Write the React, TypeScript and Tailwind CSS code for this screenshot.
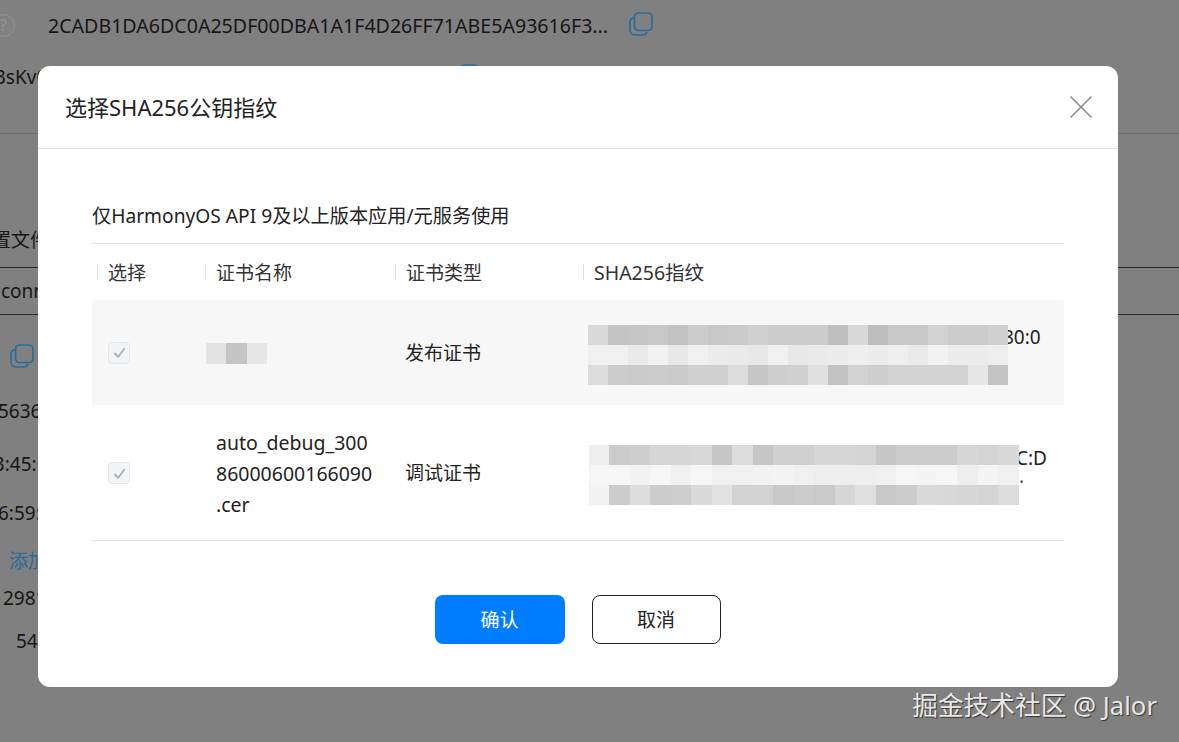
import { X } from "lucide-react";

const FONT = "font-['Noto_Sans','Noto_Sans_CJK_SC',sans-serif]";

const MOSAIC_A = [
  ["#dadada", "#c4c4c4", "#c6c6c6", "#c8c8c8", "#c2c2c2", "#cccccc", "#c8c8c8", "#cacaca", "#d0d0d0", "#cccccc", "#cccccc", "#cccccc", "#bfbfbf", "#d8d8d8", "#bdbdbd", "#c8c8c8", "#c8c8c8", "#d2d2d2", "#cccccc", "#cccccc", "#d0d0d0"],
  ["#f0f0f0", "#f0f0f0", "#eaeaea", "#f2f2f2", "#e8e8e8", "#f0f0f0", "#ececec", "#eaeaea", "#e8e8e8", "#f0f0f0", "#e8e8e8", "#eaeaea", "#ececec", "#eeeeee", "#ececec", "#eeeeee", "#eaeaea", "#f2f2f2", "#ececec", "#ececec", "#eeeeee"],
  ["#dcdcdc", "#cccccc", "#cacaca", "#cccccc", "#cacaca", "#d0d0d0", "#d0d0d0", "#dcdcdc", "#c6c6c6", "#cecece", "#d0d0d0", "#e0e0e0", "#c2c2c2", "#d2d2d2", "#cecece", "#d2d2d2", "#d2d2d2", "#d2d2d2", "#d2d2d2", "#e6e6e6", "#c4c4c4"],
];

const MOSAIC_B = [
  ["#eeeeee", "#cccccc", "#cecece", "#d6d6d6", "#d6d6d6", "#d8d8d8", "#c6c6c6", "#dcdcdc", "#c6c6c6", "#d0d0d0", "#d0d0d0", "#d6d6d6", "#d6d6d6", "#d4d4d4", "#c6c6c6", "#cccccc", "#cccccc", "#cccccc", "#d6d6d6", "#d4d4d4", "#d8d8d8"],
  ["#f5f5f5", "#f6f6f6", "#f2f2f2", "#f6f6f6", "#f0f0f0", "#f6f6f6", "#f0f0f0", "#f0f0f0", "#f2f2f2", "#f4f4f4", "#f0f0f0", "#eeeeee", "#eeeeee", "#eeeeee", "#f0f0f0", "#f6f6f6", "#f4f4f4", "#f6f6f6", "#eeeeee", "#f4f4f4", "#f0f0f0"],
  ["#f2f2f2", "#cccccc", "#dcdcdc", "#cccccc", "#cecece", "#dadada", "#e2e2e2", "#d2d2d2", "#d2d2d2", "#c8c8c8", "#cccccc", "#cacaca", "#d6d6d6", "#e0e0e0", "#c8c8c8", "#cccccc", "#dadada", "#d8d8d8", "#d6d6d6", "#d4d4d4", "#dcdcdc"],
];

function CopyIcon({ className }: { className: string }) {
  return (
    <svg viewBox="0 0 24 24" fill="none" stroke="currentColor" strokeWidth="1.7" className={className}>
      <rect x="5.5" y="1" width="17.5" height="17.5" rx="4" />
      <path d="M4.5 5.5C2.4 6.3 1 8 1 10.5v7.5c0 3 2.2 5 5 5h7.5c2.2 0 3.8-1 4.6-3" />
    </svg>
  );
}

function Check() {
  return (
    <div className="flex h-[22px] w-[22px] items-center justify-center rounded-[4px] border border-[#e3e7ec] bg-[#f2f4f6]">
      <svg viewBox="0 0 16 16" fill="none" stroke="#aeb2b6" strokeWidth="2" className="h-[15px] w-[15px]">
        <path d="M2.5 8.5 6.5 12.5 13.5 3.5" />
      </svg>
    </div>
  );
}

function Mosaic({ rows, className }: { rows: string[][]; className: string }) {
  return (
    <div className={className}>
      {rows.map((row, i) => (
        <div key={i} className="flex h-5">
          {row.map((c, j) => (
            <div key={j} className="flex-1" style={{ backgroundColor: c }} />
          ))}
        </div>
      ))}
    </div>
  );
}

function HeadCell({ label, className }: { label: string; className: string }) {
  return (
    <div className={className}>
      <div className="h-4 w-px bg-[#e0e0e0]" />
      <span className="pt-[1px]">{label}</span>
    </div>
  );
}

export default function App() {
  return (
    <div className={`${FONT} relative h-[742px] w-full overflow-hidden bg-[#808080] text-[19px] leading-[28px] text-[#161616]`}>
      {/* 遮罩下面的页面 */}
      <div className="flex h-[50px] items-center">
        <div className="-ml-[8px] flex h-[23px] w-[23px] items-center justify-center rounded-full border-[1.5px] border-[#949494] text-[16px] text-[#949494]">?</div>
        <span className="ml-[33px] mt-[1px] text-[19.6px]">2CADB1DA6DC0A25DF00DBA1A1F4D26FF71ABE5A93616F3...</span>
        <CopyIcon className="ml-[21px] mt-[-3px] h-6 w-6 shrink-0 text-[#2a6b9c]" />
      </div>
      <div className="-ml-[5px] mt-[13px] h-[71px] border-b border-[#6f6f6f]">3sKv0</div>
      <div className="-ml-[8px] mt-[92px] h-[41px] leading-[28px]">置文件</div>
      <div className="h-[48px] border-y border-[#2a2a2a] pl-[1px] leading-[46px]">conn</div>
      <CopyIcon className="ml-[10px] mt-[29px] h-6 w-6 text-[#2a6b9c]" />
      <div className="-ml-[2px] mt-[29px]">5636</div>
      <div className="-ml-[17px] mt-[25px]">13:45:0</div>
      <div className="-ml-[2px] mt-[21px]">6:59:</div>
      <div className="ml-[9px] mt-[20px] text-[#2a6b9c]">添加</div>
      <div className="ml-[3px] mt-[9px]">2981</div>
      <div className="ml-[16px] mt-[15px]">54</div>

      {/* 被弹窗挡住的复制图标，只露出上沿 */}
      <CopyIcon className="absolute left-[455px] top-[64px] h-6 w-6 text-[#2a6b9c]" />

      {/* 弹窗 */}
      <div className="absolute left-[38px] top-[66px] flex h-[621px] w-[1080px] flex-col rounded-[12px] bg-white text-[#222222]">
        <div className="flex h-[83px] shrink-0 items-center justify-between border-b border-[#e6e6e6] pl-[27px] pr-[17px]">
          <h2 className="text-[22px] font-normal">选择SHA256公钥指纹</h2>
          <X className="h-[40px] w-[40px] text-[#8c8c8c]" strokeWidth={1} />
        </div>

        <div className="flex flex-1 flex-col px-[54px]">
          <p className="mt-[54px] h-[40px] text-[19.2px] leading-[26px]">仅HarmonyOS API 9及以上版本应用/元服务使用</p>

          <div className="grid h-[57px] grid-cols-[113px_190px_188px_1fr] items-center border-t border-[#e6e6e6] text-[#333333]">
            <HeadCell label="选择" className="flex items-center gap-[10px] pl-[5px]" />
            <HeadCell label="证书名称" className="flex items-center gap-[10px]" />
            <HeadCell label="证书类型" className="flex items-center gap-[10px]" />
            <HeadCell label="SHA256指纹" className="flex items-center gap-[10px] text-[19.5px]" />
          </div>

          <div className="grid h-[105px] grid-cols-[113px_189px_184px_1fr] items-center rounded-[2px] bg-[#f7f7f7]">
            <div className="pl-4"><Check /></div>
            <div className="flex pl-[1px]">
              <div className="mt-[2px] h-[21px] w-5 bg-[#e3e3e3]" />
              <div className="mt-[2px] h-[21px] w-[21px] bg-[#c4c4c4]" />
              <div className="mt-[2px] h-[21px] w-5 bg-[#e6e6e6]" />
            </div>
            <div className="pl-[11px]">发布证书</div>
            <div className="relative mt-[5px] h-[60px] pl-[10px]">
              <span className="absolute left-[425px] -top-[2px]">80:0</span>
              <Mosaic rows={MOSAIC_A} className="relative w-[420px]" />
            </div>
          </div>

          <div className="grid h-[136px] grid-cols-[113px_189px_184px_1fr] items-center border-b border-[#e6e6e6]">
            <div className="pl-4 pt-[1px]"><Check /></div>
            <div className="whitespace-nowrap pl-[11px] pt-[2px] text-[19.5px] leading-[31px]">
              auto_debug_300<br />86000600166090<br />.cer
            </div>
            <div className="pl-[11px]">调试证书</div>
            <div className="relative mt-[5px] h-[60px] pl-[11px]">
              <span className="absolute left-[438px] -top-[1px]">C:D</span>
              <span className="absolute left-[441px] top-[17px] text-[#555555]">.</span>
              <Mosaic rows={MOSAIC_B} className="relative w-[430px]" />
            </div>
          </div>

          <div className="mt-[54px] flex justify-center gap-[27px] pr-[1px]">
            <button className="h-[49px] w-[130px] rounded-[8px] bg-[#007dff] text-white">确认</button>
            <button className="h-[49px] w-[129px] rounded-[8px] border border-[#222222] bg-white">取消</button>
          </div>
        </div>
      </div>

      <div className="absolute bottom-[19px] right-[22px] text-[25.7px] leading-[34px] text-[#e8e8e8] [text-shadow:1px_1px_1px_#333333]">
        掘金技术社区 @ Jalor
      </div>
    </div>
  );
}
